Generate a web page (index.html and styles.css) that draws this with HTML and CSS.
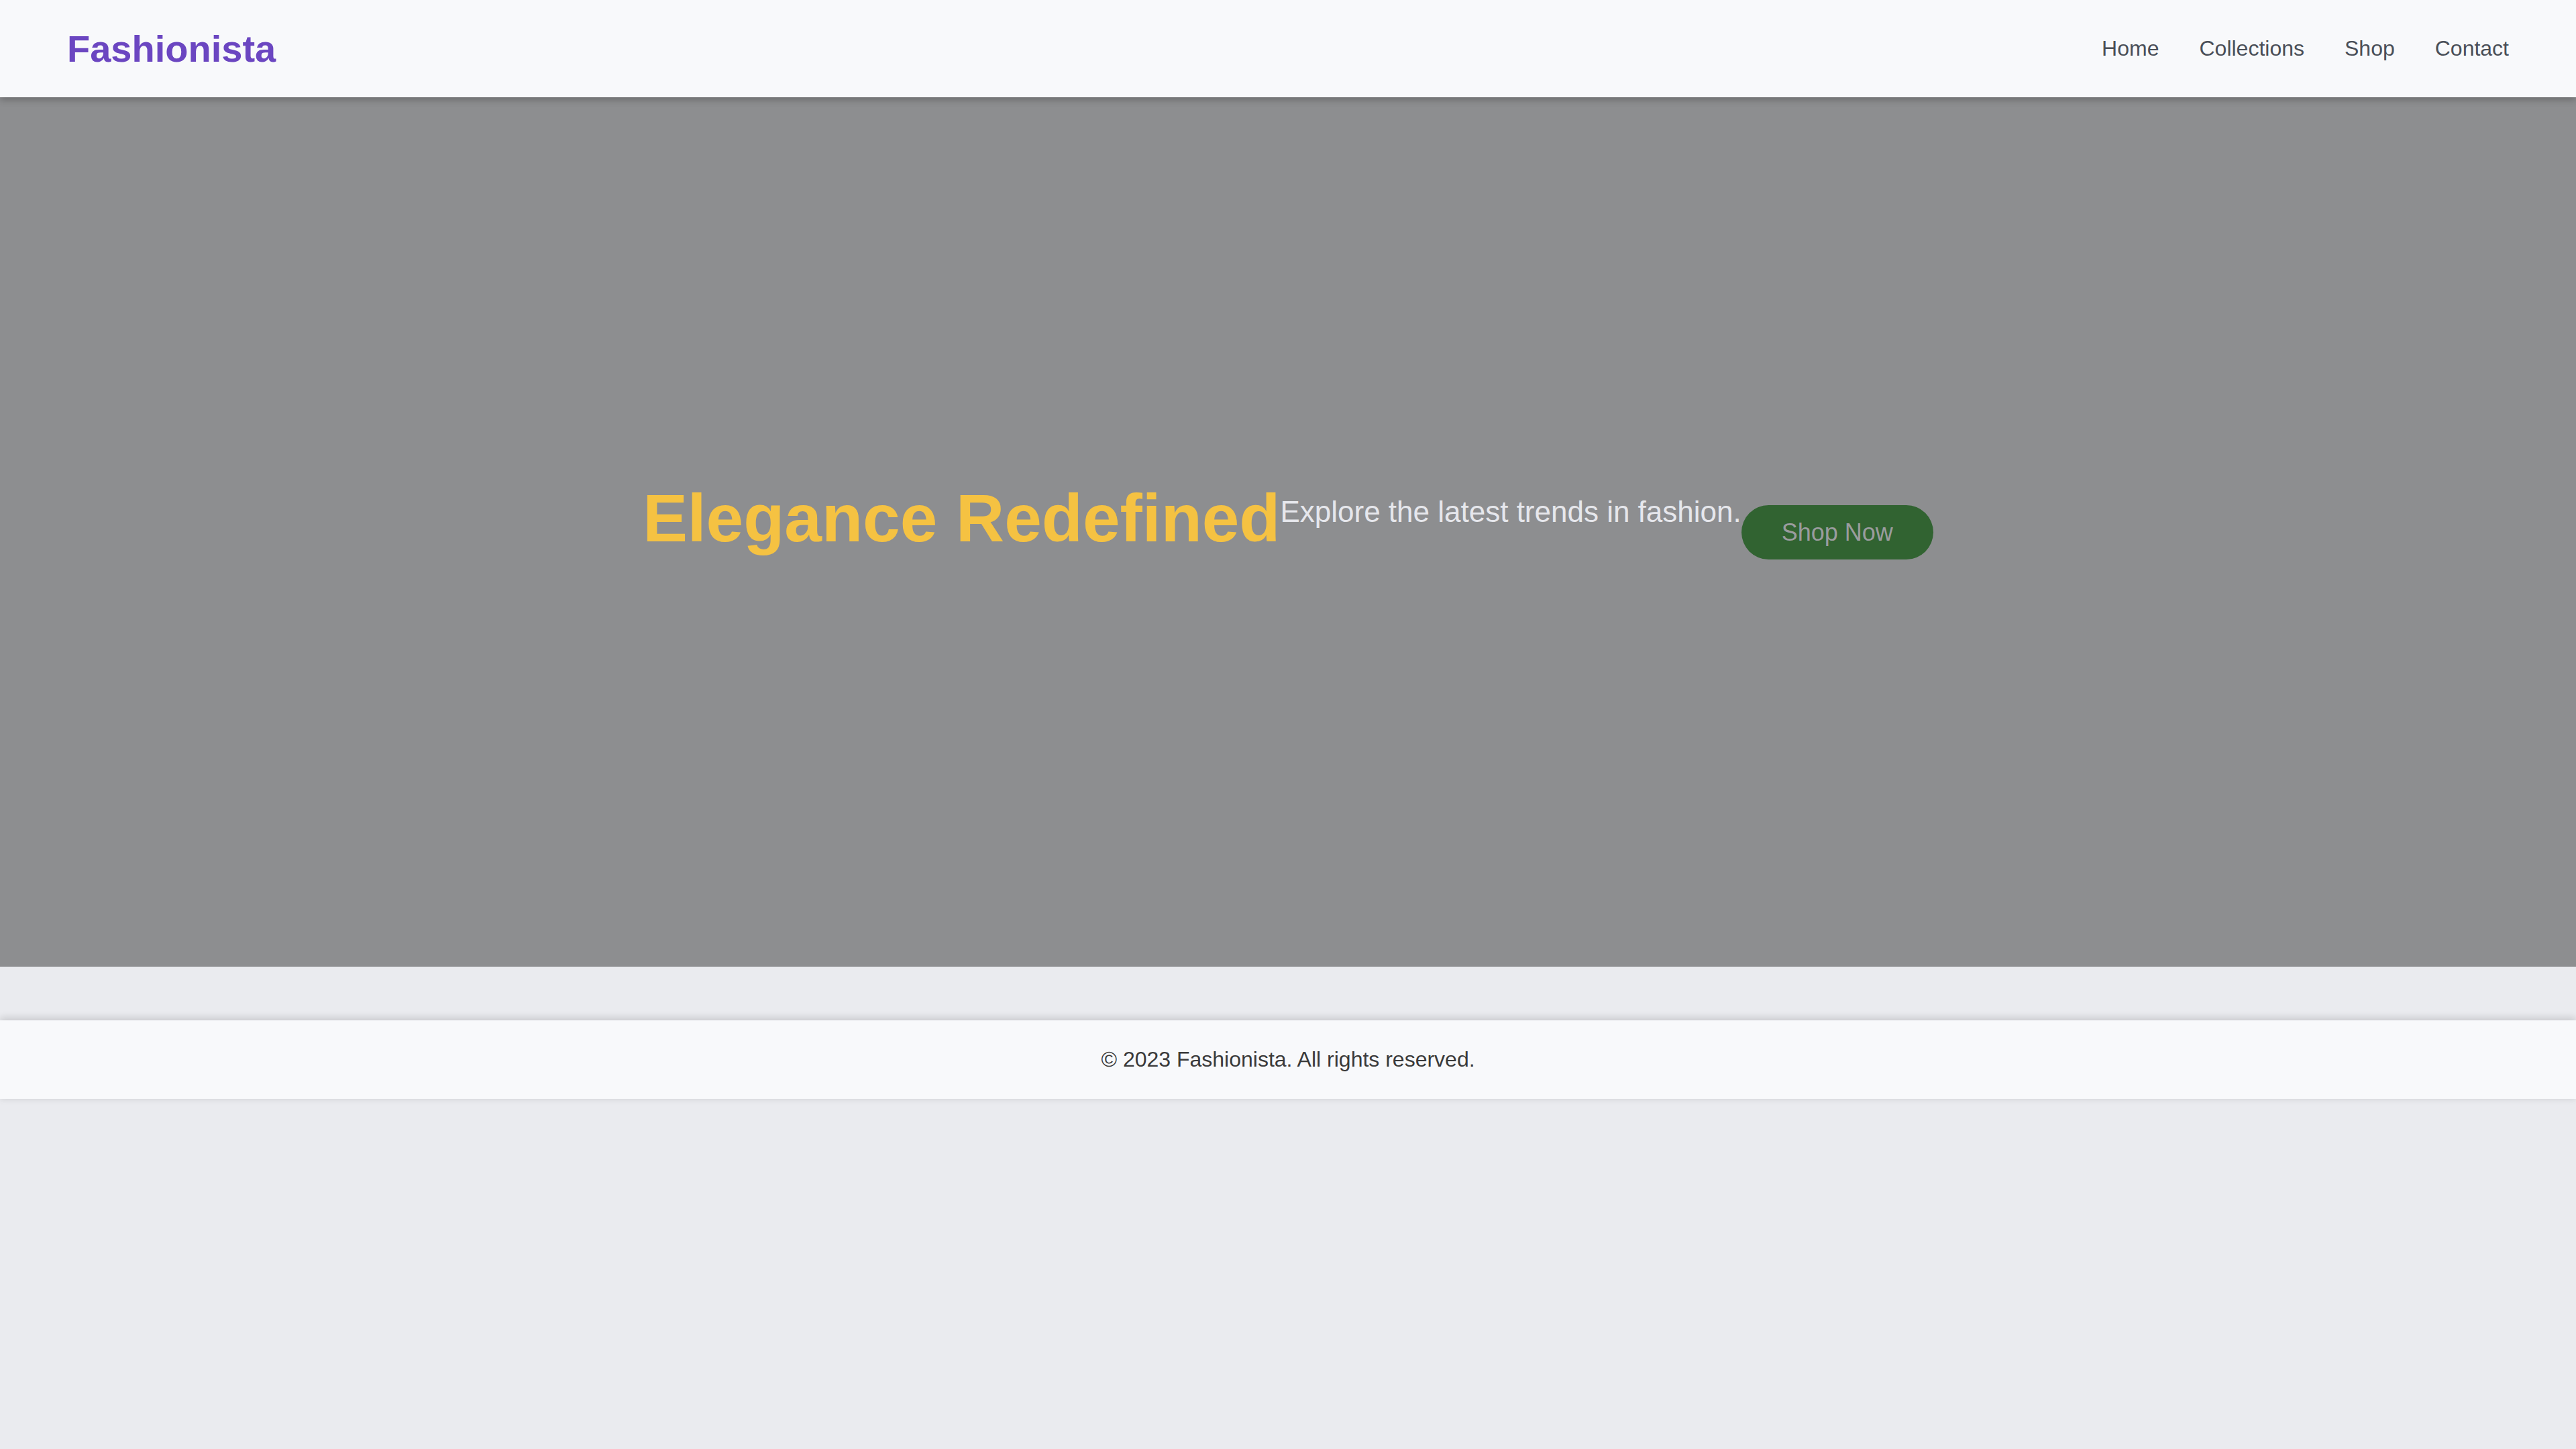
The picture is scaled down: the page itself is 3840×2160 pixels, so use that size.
FILE: index.html
```html
<!DOCTYPE html>
<html lang="en">
<head>
<meta charset="utf-8">
<title>Fashionista</title>
<link rel="stylesheet" href="styles.css">
</head>
<body>
<header class="site-header">
  <a class="logo" href="#">Fashionista</a>
  <nav class="nav">
    <a href="#">Home</a>
    <a href="#">Collections</a>
    <a href="#">Shop</a>
    <a href="#">Contact</a>
  </nav>
</header>
<section class="hero">
  <h1 class="hero-title">Elegance Redefined</h1>
  <p class="hero-text">Explore the latest trends in fashion.</p>
  <a class="hero-btn" href="#">Shop Now</a>
</section>
<footer class="site-footer">
  <p>© 2023 Fashionista. All rights reserved.</p>
</footer>
</body>
</html>
```
FILE: styles.css
```css
* { box-sizing: border-box; }
html, body {
  margin: 0;
  padding: 0;
}
body {
  background: #eaebef;
  font-family: "Liberation Sans", Arial, sans-serif;
  min-height: 2160px;
}
a { text-decoration: none; }

.site-header {
  position: relative;
  z-index: 2;
  height: 145px;
  padding: 0 100px;
  display: flex;
  align-items: center;
  justify-content: space-between;
  background: #f8f9fb;
  box-shadow: 0 4px 10px rgba(0, 0, 0, 0.25);
}
.logo {
  font-size: 56px;
  font-weight: 700;
  color: #6b46c1;
}
.nav {
  display: flex;
  gap: 60px;
}
.nav a {
  font-size: 32px;
  color: #4a4f58;
}

.hero {
  height: 1296px;
  background: #8d8e90;
  display: flex;
  align-items: center;
  justify-content: center;
}
.hero-title {
  margin: 0 0 42px;
  font-size: 100px;
  font-weight: 700;
  color: #f5c242;
}
.hero-text {
  margin: 0 0 60px;
  font-size: 44px;
  color: #e6e7ec;
}
.hero-btn {
  display: inline-block;
  padding: 20px 60px;
  border-radius: 999px;
  background: #316331;
  color: #9a9c9e;
  font-size: 36px;
  line-height: 41px;
}

.site-footer {
  margin-top: 80px;
  padding: 40px 0;
  background: #f8f9fb;
  text-align: center;
  box-shadow: 0 -4px 10px rgba(0, 0, 0, 0.14), 0 4px 8px rgba(0, 0, 0, 0.04);
}
.site-footer p {
  margin: 0;
  font-size: 32px;
  color: #3a3a3a;
}
```
